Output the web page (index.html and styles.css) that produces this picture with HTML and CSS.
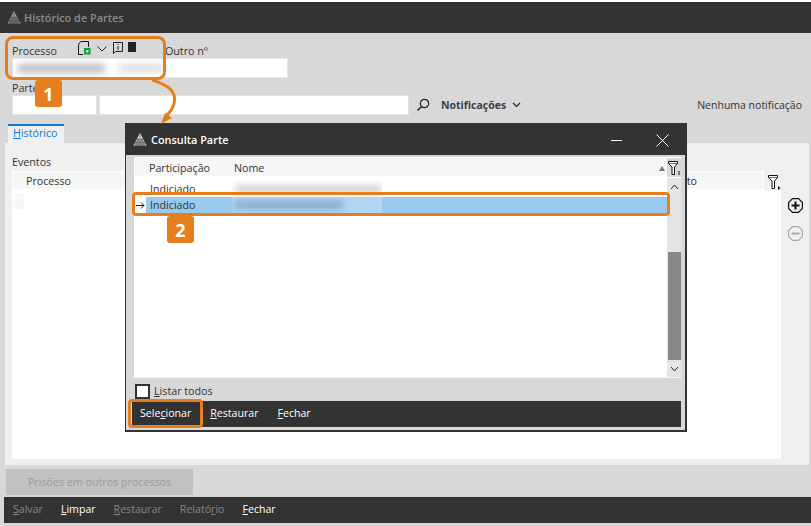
FILE: index.html
```html
<!DOCTYPE html>
<html lang="pt">
<head>
<meta charset="utf-8">
<title>Histórico de Partes</title>
<link rel="stylesheet" href="styles.css">
</head>
<body>
<svg width="0" height="0" class="defs"><defs>
  <symbol id="logo" viewBox="0 0 14 13"><path d="M7 0 L13.500 12.500 H.5 Z" fill="currentColor"/><path d="M7 2V13M5 5V13M9 5V13M3 8V13M11 8V13M3.500 7H10.500M2.500 9.200H11.500M1.500 11H12.500" stroke="#333" stroke-width=".7" fill="none"/></symbol>
  <symbol id="funnel" viewBox="0 0 13 15"><path d="M.5.500H9.500V2.500L6.500 6V13.500H4V6L.5 2.500Z" fill="#fff" stroke="#111" stroke-width="1"/><path d="M.5 2.500H9.500" stroke="#111" stroke-width=".6"/></symbol>
</defs></svg>
<main class="window">
  <header class="titlebar muted-title">
    <svg class="logo"><use href="#logo"/></svg>
    <span>Histórico de Partes</span>
  </header>
  <section class="form">
    <div class="row-one">
      <div class="field field-process">
        <div class="process-label">
          <label>Processo</label>
          <span class="process-icons">
            <svg width="13" height="14" viewBox="0 0 13 14"><path d="M.5 13.500V4.500C.5 2.500 2 .5 4 .5H10.500V6" fill="none" stroke="#111"/><path d="M.5 13.500H5" stroke="#111"/><rect x="6" y="7" width="6.500" height="6.500" fill="#0a9e3c"/><rect x="8.200" y="9.200" width="2.200" height="2.200" fill="#fff"/></svg>
            <svg class="pi-chev" width="10" height="6" viewBox="0 0 10 6"><path d="M.5.5L5 5L9.500.5" fill="none" stroke="#222"/></svg>
            <svg class="pi-info" width="10" height="12" viewBox="0 0 10 12"><path d="M.5.500H9.500V9.500H2.500L.5 11.500Z" fill="none" stroke="#222"/><path d="M5 2V3M5 4V8" stroke="#222"/></svg>
            <i class="square"></i>
          </span>
        </div>
        <div class="input input-process"><i class="blur blur-a"></i><i class="blur blur-b"></i></div>
      </div>
      <div class="field field-other">
        <label>Outro nº</label>
        <div class="input"></div>
      </div>
    </div>
    <div class="field field-parte">
      <label>Parte</label>
      <div class="row-two">
        <div class="input input-short"></div>
        <div class="input input-long"></div>
        <svg class="search" width="14" height="14" viewBox="0 0 14 14"><circle cx="8.500" cy="5.500" r="4.200" fill="none" stroke="#222" stroke-width="1.200"/><path d="M5.500 8.500L1.500 12.500" stroke="#222" stroke-width="1.400"/></svg>
        <span class="notif">Notificações</span>
        <svg class="chev" width="9" height="6" viewBox="0 0 9 6"><path d="M1 1L4.500 4.500L8 1" fill="none" stroke="#222" stroke-width="1.200"/></svg>
        <span class="none">Nenhuma notificação</span>
      </div>
    </div>
  </section>
  <nav class="tabs"><span class="tab"><u>H</u>istórico</span></nav>
  <section class="panel">
    <div class="panel-main">
      <div class="events">Eventos</div>
      <div class="head-row">
        <div class="grid-head">
          <span class="col-proc">Processo</span>
          <span class="col-to">to</span>
        </div>
        <svg class="filter-main" width="13" height="15" viewBox="0 0 13 15"><use href="#funnel"/><path d="M10 11V15L12.500 13Z" fill="#111"/></svg>
      </div>
      <div class="grid-body"><i class="row-mark"></i></div>
    </div>
    <div class="panel-side">
      <svg class="side-btn" width="15" height="15" viewBox="0 0 15 15"><path d="M4.500.6H10.500L14.400 4.500V10.500L10.500 14.400H4.500L.6 10.500V4.500Z" fill="none" stroke="#111" stroke-width="1.200"/><path d="M3.500 7.500H11.500M7.500 3.500V11.500" stroke="#111" stroke-width="2"/></svg>
      <svg class="side-btn" width="15" height="15" viewBox="0 0 15 15"><path d="M4.500.6H10.500L14.400 4.500V10.500L10.500 14.400H4.500L.6 10.500V4.500Z" fill="none" stroke="#aaa" stroke-width="1.200"/><path d="M3.500 7.500H11.500" stroke="#aaa" stroke-width="2"/></svg>
    </div>
  </section>
  <div class="prisoes-row"><button class="prisoes">Prisões em outros processos</button></div>
  <footer class="actionbar">
    <span class="off"><u>S</u>alvar</span>
    <span><u>L</u>impar</span>
    <span class="off"><u>R</u>estaurar</span>
    <span class="off">Relató<u>r</u>io</span>
    <span><u>F</u>echar</span>
  </footer>
</main>

<div class="dialog">
  <header class="titlebar dlg-title">
    <svg class="logo"><use href="#logo"/></svg>
    <span class="dlg-name">Consulta Parte</span>
    <svg class="win-btn" width="11" height="12" viewBox="0 0 11 12"><path d="M0 6.500H11" stroke="#fff"/></svg>
    <svg class="win-btn win-close" width="13" height="13" viewBox="0 0 13 13"><path d="M.5.5L12.500 12.500M12.500.5L.5 12.500" stroke="#fff"/></svg>
  </header>
  <div class="dlg-body">
    <div class="list">
      <div class="list-head">
        <span class="lh-part">Participação</span>
        <span class="lh-name">Nome</span>
        <i class="sort"></i>
        <span class="lh-filter"><svg width="13" height="15" viewBox="0 0 13 15"><use href="#funnel"/><path d="M11 10V14" stroke="#111"/></svg></span>
      </div>
      <div class="list-main">
        <div class="rows">
          <div class="lrow"><i class="lmark"></i><span class="lcell">Indiciado</span><div class="blur-box"><i class="blur blur-c"></i></div></div>
          <div class="lrow lrow-sel">
            <i class="lmark"><svg width="9" height="7" viewBox="0 0 9 7"><path d="M0 3.500H8M5 .5L8 3.500L5 6.500" fill="none" stroke="#222"/></svg></i>
            <div class="sel-fill"><span class="lcell">Indiciado</span><div class="blur-box blur-box-sel"><i class="blur blur-d"></i></div></div>
          </div>
        </div>
        <div class="scroll">
          <span class="sbtn"><svg width="9" height="6" viewBox="0 0 9 6"><path d="M1 5L4.500 1L8 5" fill="none" stroke="#222"/></svg></span>
          <span class="strack"></span>
          <span class="sthumb"></span>
          <span class="sbtn"><svg width="9" height="6" viewBox="0 0 9 6"><path d="M1 1L4.500 5L8 1" fill="none" stroke="#222"/></svg></span>
        </div>
      </div>
    </div>
    <div class="check-row"><i class="check"></i><span><u>L</u>istar todos</span></div>
    <footer class="actionbar dlg-bar">
      <span>Sele<u>c</u>ionar</span>
      <span><u>R</u>estaurar</span>
      <span><u>F</u>echar</span>
    </footer>
  </div>
</div>

<div class="mark mark-1"></div>
<div class="badge badge-1">1</div>
<svg class="arrow" width="40" height="52" viewBox="0 0 40 52"><path d="M4 0C14 3 24 8 26 15C28 23 25 30 17 37" fill="none" stroke="#e67e1d" stroke-width="3"/><path d="M13 44L17 33L24 38Z" fill="#e67e1d"/></svg>
<div class="mark mark-2"></div>
<div class="badge badge-2">2</div>
<div class="mark mark-3"></div>
</body>
</html>
```
FILE: styles.css
```css
* { box-sizing: border-box; }
html, body { margin: 0; padding: 0; width: 811px; height: 526px; overflow: hidden; background: #fff; }
body { position: relative; font-family: "Open Sans", "Noto Sans", sans-serif; font-size: 10.7px; color: #333; }
.defs { position: absolute; }
i { display: block; }
u { text-underline-offset: 1px; }
label { display: block; line-height: 14px; }

.window { margin-top: 2px; height: 524px; background: #d8d8d8; display: flex; flex-direction: column; }
.titlebar { height: 31px; flex: none; background: #333; display: flex; align-items: center; padding-left: 7px; font-weight: 600; font-size: 10.9px; }
.muted-title { color: #8b8b8b; }
.logo { width: 14px; height: 13px; margin-right: 3px; color: #a5a5a5; }

.form { height: 88px; flex: none; padding: 11px 9px 0 12px; }
.row-one { display: flex; height: 34px; }
.field-process { width: 152px; margin-right: 1px; }
.process-label { display: flex; height: 14px; align-items: center; position: relative; }
.process-icons { display: flex; align-items: center; gap: 6px; margin-left: 21px; margin-top: -7px; }
.pi-chev { margin-top: 2px; }
.square { width: 8px; height: 10px; background: #222; margin-left: -1px; margin-top: -2px; }
.input { background: #fff; height: 20px; border: 1px solid #e4e4e4; }
.input-process { display: flex; gap: 4px; align-items: center; padding-left: 5px; overflow: hidden; border-right: 0; }
.field-other { width: 123px; }
.field-parte { margin-top: 3px; }
.field-parte label { height: 14px; }
.row-two { display: flex; align-items: center; height: 20px; }
.input-short { width: 85px; margin-right: 2px; }
.input-long { width: 310px; }
.search { margin-left: 7px; }
.notif { font-weight: 700; margin-left: 11px; color: #3c3f4a; font-size: 10.5px; }
.chev { margin-left: 6px; }
.none { margin-left: auto; white-space: nowrap; font-size: 10.5px; }

.blur { filter: blur(3.5px); background: #bdbdbd; }
.blur-a { width: 88px; height: 9px; }
.blur-b { width: 45px; height: 8px; background: #dcdcdc; margin-left: 10px; }
.blur-box { width: 150px; height: 16px; overflow: hidden; display: flex; align-items: center; }
.blur-box-sel { background: #b2d6f2; }

.tabs { height: 19px; flex: none; padding-left: 8px; margin-top: 3px; display: flex; }
.tab { width: 56px; background: #f0f0f0; border-top: 2px solid #0a78d7; padding-left: 5px; color: #0a78d7; line-height: 15px; }

.panel { flex: none; margin-left: 5px; height: 322px; width: 804px; background: #f0f0f0; display: flex; }
.panel-main { width: 776px; padding: 12px 0 6px 7px; display: flex; flex-direction: column; }
.events { height: 16px; line-height: 14px; }
.head-row { display: flex; align-items: center; flex: none; height: 20px; }
.grid-head { flex: 1; height: 20px; background: #f6f6f6; border: 1px solid #fff; border-bottom: 2px solid #fff; display: flex; justify-content: space-between; align-items: center; padding-left: 13px; padding-right: 5px; }
.col-to { margin-right: 61px; }
.filter-main { flex: none; margin: 2px 0 0 4px; }
.grid-body { flex: 1; background: #fff; padding: 2px 0 0 2px; }
.row-mark { width: 10px; height: 16px; background: #f8f8f8; }
.panel-side { flex: 1; display: flex; flex-direction: column; align-items: flex-start; padding: 55px 0 0 7px; gap: 13px; }

.prisoes-row { flex: none; padding: 4px 0 0 6px; height: 32px; }
.prisoes { width: 187px; height: 26px; border: 0; background: #c1c1c1; color: #9b9b9b; font: inherit; padding: 0; }

.actionbar { background: #333; height: 26px; flex: none; margin-left: 4px; display: flex; align-items: center; padding: 0 0 3px 9px; gap: 18px; color: #fff; font-size: 10.6px; }
.actionbar .off { color: #858585; }
.actionbar u { text-decoration-thickness: 1px; }

.dialog { position: absolute; left: 125px; top: 123px; width: 562px; height: 309px; background: #d8d8d8; border: 1px solid #333; border-width: 0 2px 2px 1px; display: flex; flex-direction: column; }
.dlg-title { height: 32px; color: #fff; padding-left: 7px; }
.dlg-name { flex: 1; }
.dlg-title .logo { color: #e8e8e8; margin-right: 4px; }
.win-btn { margin: 2px 34px 0 0; }
.win-close { margin-right: 16px; }
.dlg-body { flex: 1; padding: 2px 4px 3px 6px; display: flex; flex-direction: column; }
.list { height: 221px; flex: none; margin-left: 2px; border-bottom: 1px solid #f4f4f4; display: flex; flex-direction: column; }
.list-head { height: 21px; flex: none; display: flex; align-items: center; background: #f6f6f6; border: 1px solid #fff; border-bottom-width: 2px; border-right: 0; padding: 2px 0 0 14px; }
.lh-part { width: 85px; }
.lh-name { flex: 1; }
.sort { width: 0; height: 0; border: 3px solid transparent; border-bottom: 5px solid #777; border-top: 0; margin-right: 2px; }
.lh-filter { background: #d8d8d8; width: 14px; height: 19px; margin-top: -2px; padding: 3px 0 0 1px; display: block; }
.lh-filter svg { display: block; }
.list-main { flex: 1; display: flex; background: #fff; min-height: 0; }
.rows { flex: 1; padding-top: 3px; }
.lrow { display: flex; height: 16px; align-items: center; }
.lmark { width: 12px; flex: none; display: flex; align-items: center; padding-left: 2px; }
.lcell { width: 86px; flex: none; padding-left: 4px; }
.sel-fill { flex: 1; height: 16px; background: #99c9ee; display: flex; align-items: center; }
.blur-c { width: 146px; height: 8px; background: #cfcfcf; margin-left: 3px; }
.blur-d { width: 108px; height: 8px; background: #86a8cf; margin-left: 3px; }
.scroll { width: 14px; flex: none; display: flex; flex-direction: column; background: #e5e5e5; }
.sbtn { height: 17px; flex: none; display: flex; align-items: center; justify-content: center; }
.strack { height: 57px; flex: none; }
.sthumb { flex: 1; background: #878787; margin-left: 1px; }
.check-row { height: 24px; flex: none; display: flex; align-items: center; padding: 2px 0 0 3px; gap: 4px; }
.check { width: 15px; height: 15px; background: #fff; border: 2px solid #333; }
.dlg-bar { margin: -1px 0 0; height: 26px; padding-left: 8px; gap: 19px; }

.mark { position: absolute; border: 3px solid #e67e1d; border-radius: 6px; }
.mark-1 { left: 5px; top: 36px; width: 161px; height: 44px; border-radius: 8px; }
.mark-2 { left: 132px; top: 192px; width: 538px; height: 24px; border-radius: 4px; }
.mark-3 { left: 128px; top: 399px; width: 75px; height: 29px; border-radius: 4px; }
.badge { position: absolute; width: 27px; height: 27px; background: #e67e1d; color: #fff; font-size: 18px; font-weight: 700; border-radius: 3px; display: flex; align-items: center; justify-content: center; }
.badge-1 { left: 35px; top: 80px; }
.badge-2 { left: 167px; top: 216px; }
.arrow { position: absolute; left: 148px; top: 80px; }
```
